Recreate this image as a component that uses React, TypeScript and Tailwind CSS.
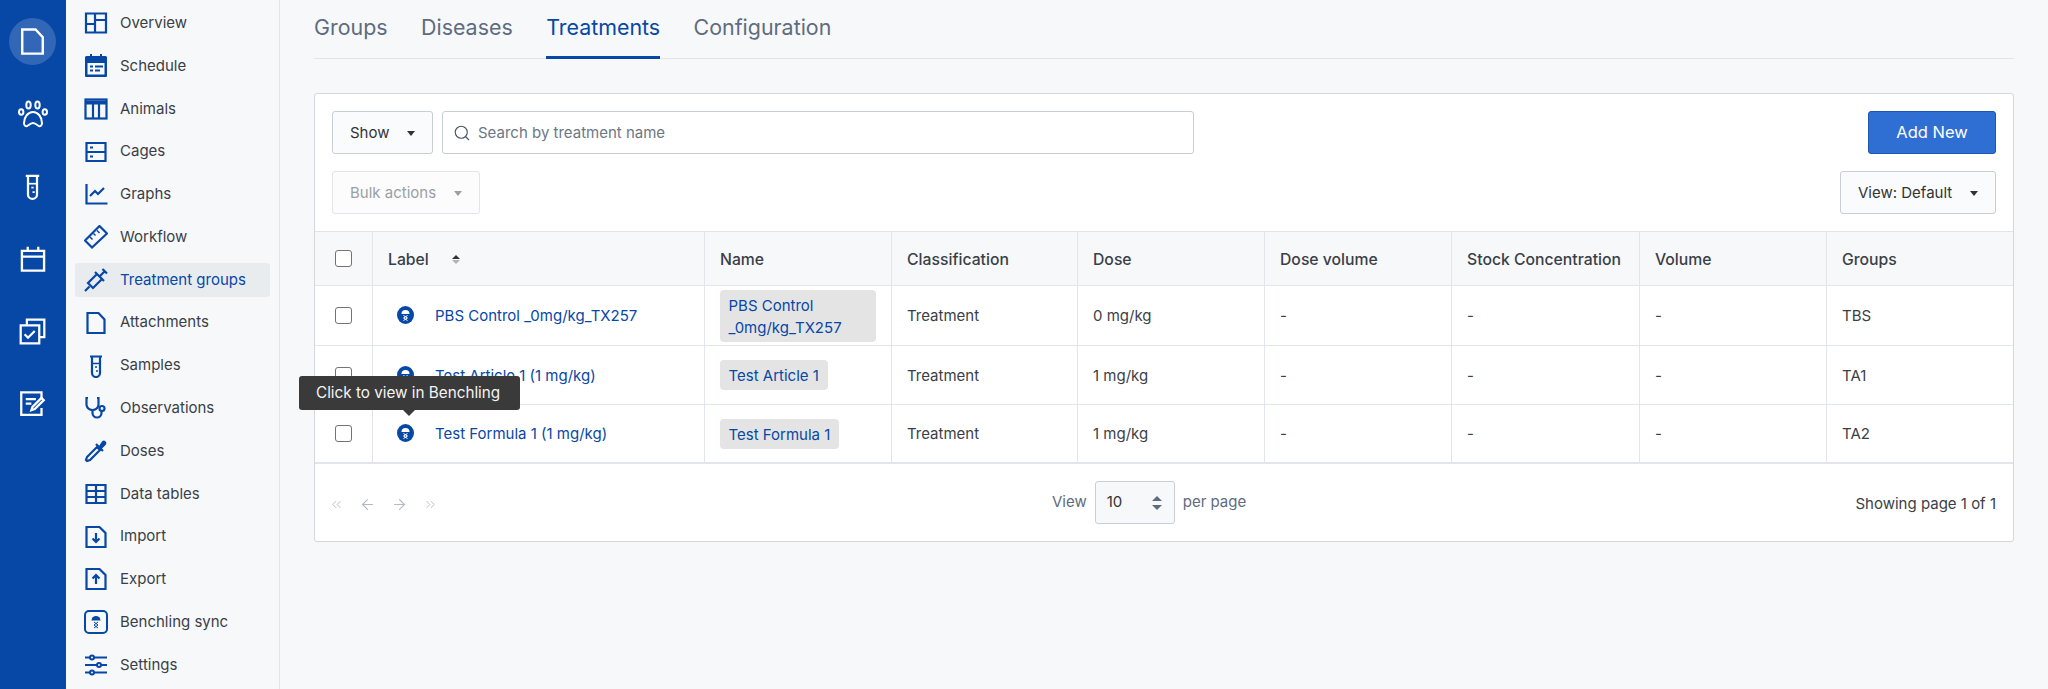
import { ArrowLeft, ArrowRight, ChevronsLeft, ChevronsRight, Search } from 'lucide-react'
import type { ReactNode } from 'react'

const Ico = ({ children, size = 24, stroke = 2.2 }: { children: ReactNode; size?: number; stroke?: number }) => (
    <svg width={size} height={size} viewBox="0 0 24 24" fill="none" stroke="currentColor" strokeWidth={stroke}>
        {children}
    </svg>
)

const DocIcon = () => <path d="M3.500 2h11l6 6.500V22h-17z" />
const TubeIcon = () => (
    <>
        <path d="M6 2.500h12M8 3v16a4 4 0 0 0 8 0V3" />
        <path d="M8 9.500h8" strokeWidth={1.500} />
        <path d="M11 13h2M12 17h2" strokeWidth={1.500} />
    </>
)
const CheckStack = () => (
    <>
        <path d="M7 6V1.500h15.500V17H18" />
        <path d="M1.500 6.500H18V22.500H1.500z" />
        <path d="M5 14.500l3 3 6-6" />
    </>
)

const railIcons = [
    <Ico size={29} stroke={2} key="doc"><DocIcon /></Ico>,
    <svg key="paw" width="30" height="28" viewBox="0 0 30 28" fill="none" stroke="currentColor" strokeWidth="2">
        <path d="M6 23c0-6 4-11 9-11s9 5 9 11c0 3-2 4-4 2.500-1.500-1.200-3-2.500-5-2.500s-3.500 1.300-5 2.500C8 27 6 26 6 23z" />
        <ellipse cx="10.500" cy="5" rx="2.200" ry="3.500" />
        <ellipse cx="19.500" cy="5" rx="2.200" ry="3.500" />
        <ellipse cx="3.200" cy="12" rx="2.200" ry="2.800" />
        <ellipse cx="26.800" cy="12" rx="2.200" ry="2.800" />
    </svg>,
    <Ico size={27} stroke={2} key="tube"><TubeIcon /></Ico>,
    <Ico size={28} stroke={2} key="cal">
        <path d="M2.500 5h19v17h-19zM2.500 10h19M7.500 1.500V6M16.500 1.500V6" />
    </Ico>,
    <Ico size={27} stroke={2} key="checks"><CheckStack /></Ico>,
    <Ico size={27} stroke={2} key="note">
        <path d="M20 8V2H2v20h18v-6" />
        <path d="M6 8h9M6 12h5M11 18l1-3 8-8 2 2-8 8z" />
    </Ico>,
]

const navIcons: ReactNode[] = [
    <Ico key="1"><path d="M2 2.500h20v19H2zM11 2.500v19M11 13H2M11 9h11" /></Ico>,
    <svg key="2" width="24" height="24" viewBox="0 0 24 24">
        <path fill="currentColor" d="M3 2h3V0h2v2h8V0h2v2h3a2 2 0 0 1 2 1v19a1 1 0 0 1-1 1H2a1 1 0 0 1-1-1V3a2 2 0 0 1 2-1z" />
        <rect x="3.500" y="9" width="17" height="11.500" fill="#f7f8fa" />
        <path fill="currentColor" d="M6 11.500h3v2H6zM11 11.500h8v2h-8zM6 15.500h3v2H6zM11 15.500h5v2h-5z" />
    </svg>,
    <svg key="3" width="24" height="24" viewBox="0 0 24 24" fill="none" stroke="currentColor" strokeWidth="2.200">
        <rect x="1.500" y="2.500" width="21" height="19" />
        <path d="M1.500 5.500h21" strokeWidth="4" />
        <path d="M9 7v14M15 7v14" />
    </svg>,
    <Ico key="4">
        <path d="M2.500 3h19v18h-19zM2.500 12h19" />
        <path d="M6 7.500h3M6 16.500h3" />
    </Ico>,
    <Ico key="5"><path d="M2.500 2v19.500h21M6 14l5-5 3 3 6-6" /></Ico>,
    <Ico key="6">
        <path d="M8 22.500L1 15.500 15.500 1 23 8.500z" />
        <path d="M6 12l2.500 2.500M9.500 8.500l2 2M13 5.500l2.500 2.500" strokeWidth="1.500" />
    </Ico>,
    <Ico key="7">
        <path d="M1 23l4.500-4.500M4 15l5 5 9-9-5-5zM11 4l9 9M15.500 8.500L21 3M18.500 1l4.500 4.500" />
    </Ico>,
    <Ico key="8"><DocIcon /></Ico>,
    <Ico key="9"><TubeIcon /></Ico>,
    <Ico key="10">
        <path d="M4 2H2.500v7a6 6 0 0 0 6 5 6 6 0 0 0 6-5V2H13" />
        <path d="M8.500 14v3a4.500 4.500 0 0 0 9 0v-2" />
        <circle cx="18" cy="12.500" r="2.500" />
    </Ico>,
    <svg key="11" width="24" height="24" viewBox="0 0 24 24" fill="none" stroke="currentColor" strokeWidth="2.200">
        <path d="M3 22l-1-1 1-3 10-10 3 3-10 10z" />
        <path d="M12 5l7 7" />
        <path d="M15 9l4-6c1-1 3 .5 2 2l-5 5z" fill="currentColor" />
    </svg>,
    <svg key="12" width="24" height="24" viewBox="0 0 24 24" fill="none" stroke="currentColor" strokeWidth="2.200">
        <path d="M2.500 3h19v18h-19zM2.500 9h19M2.500 15h19M12 3v18" />
    </svg>,
    <Ico key="13">
        <path d="M2.500 2h13l6 6v14h-19z" />
        <path d="M12 8v9M8.500 13.500L12 17l3.500-3.500" />
    </Ico>,
    <Ico key="14">
        <path d="M2.500 2h13l6 6v14h-19z" />
        <path d="M12 17V8M8.500 11.500L12 8l3.500 3.500" />
    </Ico>,
    <svg key="15" width="24" height="24" viewBox="0 0 24 24" fill="none">
        <rect x="1" y="1" width="22" height="22" rx="4" stroke="currentColor" strokeWidth="2" />
        <path d="M7.500 10.500a4.500 4.500 0 0 1 9 0z" fill="currentColor" />
        <path d="M10 12l4 3-4 3M14 12l-4 3 4 3" stroke="currentColor" strokeWidth="1" />
    </svg>,
    <svg key="16" width="24" height="24" viewBox="0 0 24 24" fill="none" stroke="currentColor" strokeWidth="2">
        <path d="M1 4.500h22M1 12h22M1 19.500h22" />
        <circle cx="8" cy="4.500" r="2" fill="#f7f8fa" />
        <circle cx="15" cy="12" r="2" fill="#f7f8fa" />
        <circle cx="8" cy="19.500" r="2" fill="#f7f8fa" />
    </svg>,
]

const navLabels = [
    'Overview', 'Schedule', 'Animals', 'Cages', 'Graphs', 'Workflow', 'Treatment groups', 'Attachments',
    'Samples', 'Observations', 'Doses', 'Data tables', 'Import', 'Export', 'Benchling sync', 'Settings',
]

const Caret = ({ className = 'border-t-[#333]' }: { className?: string }) => (
    <span className={`w-0 h-0 border-x-[4px] border-x-transparent border-t-[5px] ${className}`} />
)

const Benchling = () => (
    <svg width="17" height="18" viewBox="0 0 17 18" className="shrink-0 -mt-[3px]">
        <ellipse cx="8.500" cy="9" rx="8.500" ry="9" fill="#0747a6" />
        <path d="M4.500 8a4 4 0 0 1 8 0z" fill="#fff" />
        <path d="M6.500 9.500l4 2.500-4 2.500M10.500 9.500l-4 2.500 4 2.500" stroke="#fff" strokeWidth="1" fill="none" />
    </svg>
)

const Check = () => <span className="block w-[17px] h-[17px] rounded-[3px] border border-[#737373] bg-white mx-auto" />

const rows = [
    { label: 'PBS Control _0mg/kg_TX257', name: 'PBS Control _0mg/kg_TX257', dose: '0 mg/kg', group: 'TBS', h: 'h-[60px]' },
    { label: 'Test Article 1 (1 mg/kg)', name: 'Test Article 1', dose: '1 mg/kg', group: 'TA1', h: 'h-[59px]' },
    { label: 'Test Formula 1 (1 mg/kg)', name: 'Test Formula 1', dose: '1 mg/kg', group: 'TA2', h: 'h-[58px]' },
]

const headers = ['Name', 'Classification', 'Dose', 'Dose volume', 'Stock Concentration', 'Volume', 'Groups']
const cell = 'border-l border-[#e2e5ea] pl-[15.500px] pr-[10px] pt-[2px] text-left align-middle'

const App = () => {
    return (
        <div className="flex h-[689px] overflow-hidden bg-[#f7f8fa] text-[15px] text-[#3a3f47] font-['Inter',sans-serif]">
            <div className="w-[66px] shrink-0 bg-[#0747a6] text-white flex flex-col pt-[18px] pl-[9px]">
                {railIcons.map((icon, i) => (
                    <div key={i} className={`w-[47px] h-[47px] mb-[25.4px] rounded-full flex items-center justify-center shrink-0 ${i === 0 ? 'bg-[#3266b6]' : ''}`}>
                        {icon}
                    </div>
                ))}
            </div>

            <div className="w-[214px] shrink-0 border-r border-[#e2e5ea] pt-[2px]">
                {navLabels.map((label, i) => (
                    <div key={label} className="h-[42.77px] flex items-center">
                        <div className={`ml-[9px] w-[195px] h-[34px] rounded-[3px] flex items-center pl-[9px] ${i === 6 ? 'bg-[#e9ecef] text-[#0747a6]' : ''}`}>
                            <span className="w-[24px] h-[24px] flex items-center justify-center text-[#0747a6] shrink-0">{navIcons[i]}</span>
                            <span className="ml-[12px] whitespace-nowrap">{label}</span>
                        </div>
                    </div>
                ))}
            </div>

            <div className="flex-1 pl-[34px] pr-[34px]">
                <div className="flex gap-[33.500px] h-[59px] border-b border-[#e2e5ea] text-[21.4px] text-[#5e6c7e]">
                    {['Groups', 'Diseases', 'Treatments', 'Configuration'].map(t => (
                        <div key={t} className={`h-[59px] pt-[11px] ${t === 'Treatments' ? 'text-[#0747a6] border-b-[3px] border-[#0747a6]' : ''}`}>{t}</div>
                    ))}
                </div>

                <div className="relative mt-[34px] h-[449px] bg-white border border-[#d3d8df] rounded-[3px]">
                    <div className="flex justify-between px-[17px] pt-[17px] h-[137px]">
                        <div>
                            <div className="flex gap-[9px]">
                                <button className="w-[101px] h-[43px] pt-[1px] rounded-[3px] border border-[#c9ced6] bg-[#fafbfc] flex items-center justify-between pl-[17px] pr-[17px] text-[#333]">
                                    Show <Caret />
                                </button>
                                <div className="w-[752px] h-[43px] pt-[1px] rounded-[3px] border border-[#c9ced6] flex items-center pl-[10px] text-[#6b7785]">
                                    <Search size={18} strokeWidth={1.500} className="text-[#4a5666]" />
                                    <span className="ml-[7px]">Search by treatment name</span>
                                </div>
                            </div>
                            <button className="mt-[17px] w-[148px] h-[43px] pt-[1px] rounded-[3px] border border-[#e2e5ea] bg-[#fcfcfd] flex items-center justify-between pl-[17px] pr-[17px] text-[#9a9fa6]">
                                Bulk actions <Caret className="border-t-[#9a9fa6]" />
                            </button>
                        </div>
                        <div className="flex flex-col items-end gap-[17px]">
                            <button className="w-[128px] h-[43px] rounded-[3px] bg-[#2f6fd4] border border-[#1c56ae] text-white text-[16.5px]">Add New</button>
                            <button className="w-[156px] h-[43px] pt-[1px] rounded-[3px] border border-[#c9ced6] bg-[#fafbfc] flex items-center justify-between px-[17px] text-[#333]">
                                View: Default <Caret />
                            </button>
                        </div>
                    </div>

                    <table className="w-full table-fixed border-collapse">
                        <colgroup>
                            <col className="w-[57px]" />
                            <col className="w-[332px]" />
                            <col className="w-[187px]" />
                            <col className="w-[186px]" />
                            <col className="w-[187px]" />
                            <col className="w-[187px]" />
                            <col className="w-[188px]" />
                            <col className="w-[187px]" />
                            <col className="w-[187px]" />
                        </colgroup>
                        <thead>
                            <tr className="h-[54px] bg-[#f7f8fa] border-y border-[#e2e5ea] font-medium">
                                <th className="align-middle"><Check /></th>
                                <th className={`${cell} font-medium text-[15.75px]`}>
                                    <span className="flex items-center">
                                        Label
                                        <span className="ml-[23px] flex flex-col gap-[1px]">
                                            <span className="w-0 h-0 border-x-[4px] border-x-transparent border-b-[4px] border-b-[#333]" />
                                            <span className="w-0 h-0 border-x-[4px] border-x-transparent border-t-[4px] border-t-[#b0b5bc]" />
                                        </span>
                                    </span>
                                </th>
                                {headers.map(h => (
                                    <th key={h} className={`${cell} font-medium text-[15.75px] whitespace-nowrap`}>{h}</th>
                                ))}
                            </tr>
                        </thead>
                        <tbody>
                            {rows.map(r => (
                                <tr key={r.label} className={`${r.h} border-b border-[#e2e5ea]`}>
                                    <td className="align-middle"><Check /></td>
                                    <td className={cell}>
                                        <span className="flex items-center pl-[9px] text-[#0747a6]">
                                            <Benchling />
                                            <span className="ml-[21px] whitespace-nowrap">{r.label}</span>
                                        </span>
                                    </td>
                                    <td className={`${cell} !pl-[15px] !pt-0`}>
                                        <span className="inline-block max-w-[156px] rounded-[4px] bg-[#e4e4e4] px-[9px] pt-[5px] pb-[3px] leading-[22px] text-[#0747a6]">{r.name}</span>
                                    </td>
                                    <td className={cell}>Treatment</td>
                                    <td className={cell}>{r.dose}</td>
                                    <td className={cell}>-</td>
                                    <td className={cell}>-</td>
                                    <td className={cell}>-</td>
                                    <td className={cell}>{r.group}</td>
                                </tr>
                            ))}
                        </tbody>
                    </table>

                    <div className="h-[80px] border-t-2 border-[#e2e5ea] -mt-px relative flex items-center justify-between pl-[14px] pr-[17px] pt-[3px]">
                        <div className="flex items-center gap-[15px] text-[#b4bac2]">
                            <ChevronsLeft size={15} strokeWidth={1.500} />
                            <ArrowLeft size={17} strokeWidth={1.500} />
                            <ArrowRight size={17} strokeWidth={1.500} />
                            <ChevronsRight size={15} strokeWidth={1.500} />
                        </div>
                        <div className="absolute left-[737px] top-[17px] flex items-center text-[#5e6c7e]">
                            View
                            <div className="ml-[8px] w-[80px] h-[43px] rounded-[3px] border border-[#c9ced6] bg-[#f7f8fa] flex items-center justify-between pl-[11px] pr-[12px] text-[#333]">
                                10
                                <span className="flex flex-col gap-[4px]">
                                    <span className="w-0 h-0 border-x-[5px] border-x-transparent border-b-[5px] border-b-[#5e6c7e]" />
                                    <span className="w-0 h-0 border-x-[5px] border-x-transparent border-t-[5px] border-t-[#5e6c7e]" />
                                </span>
                            </div>
                            <span className="ml-[8px]">per page</span>
                        </div>
                        <span>Showing page 1 of 1</span>
                    </div>

                    <div className="absolute left-[-16px] top-[282px] w-[221px] h-[34px] pt-[1px] rounded-[3px] bg-[#3a3a3a] text-[#f5f5f5] text-[15.25px] flex items-center pl-[17px]">
                        Click to view in Benchling
                        <span className="absolute left-[104px] top-[34px] w-0 h-0 border-x-[6px] border-x-transparent border-t-[6px] border-t-[#3a3a3a]" />
                    </div>
                </div>
            </div>
        </div>
    )
}

export default App
